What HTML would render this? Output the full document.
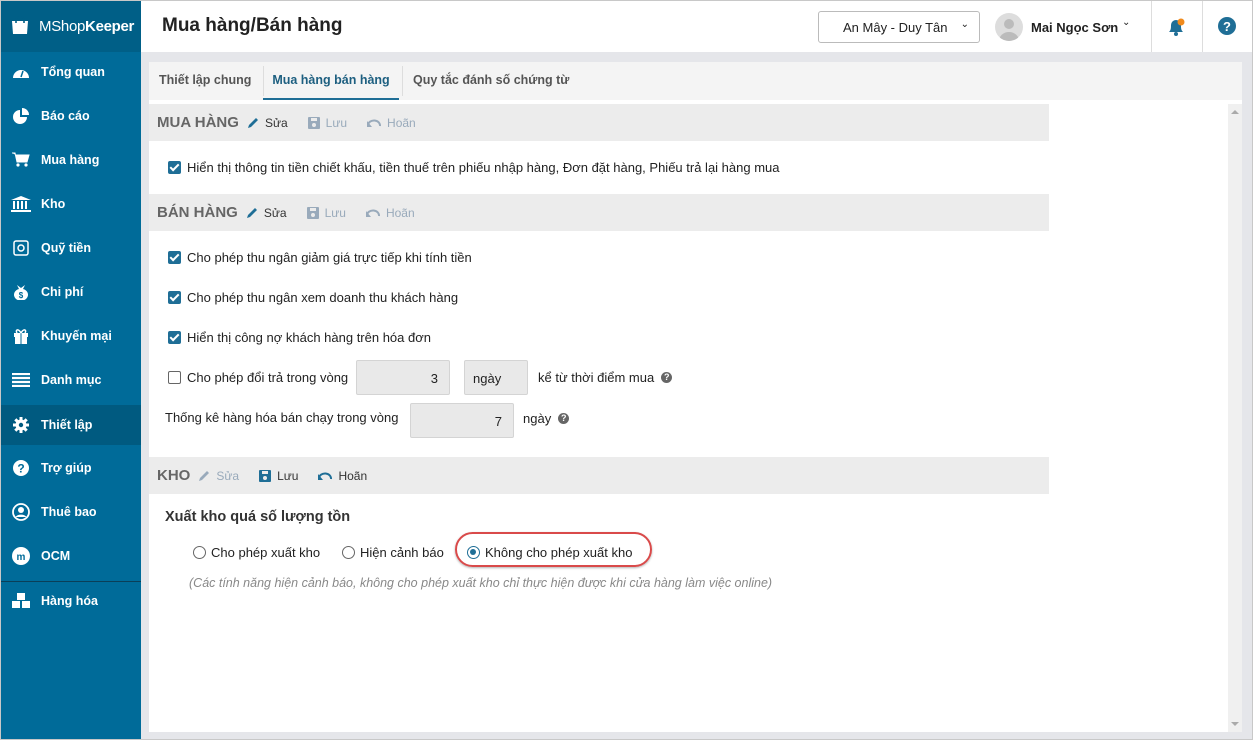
<!DOCTYPE html>
<html><head><meta charset="utf-8"><style>
*{box-sizing:border-box;margin:0;padding:0}
body{width:1253px;height:740px;overflow:hidden;font-family:"Liberation Sans",sans-serif;font-size:13px;color:#222;background:#e5e6ea;position:relative}
.frame{position:absolute;left:0;top:0;width:1253px;height:740px;border:1px solid #c8c8c8;pointer-events:none;z-index:9}
.side{position:absolute;left:0;top:0;width:141px;height:740px;background:#006b99;color:#fff}
.logo{height:52px;background:#005f87;display:flex;align-items:center;padding-left:10px;font-size:15px;letter-spacing:-0.3px}
.logo b{font-weight:bold}
.mi{position:absolute;left:0;width:141px;height:40px;display:flex;align-items:center;font-size:12.5px;font-weight:bold}
.mi .ic{width:20px;height:16px;margin:0 10px 0 11px;display:flex;align-items:center;justify-content:center}
.mi.act{background:#005a80}
.top{position:absolute;left:141px;top:0;right:0;height:52px;background:#fff}
.title{position:absolute;left:21px;top:15px;font-size:19px;font-weight:bold;color:#222}
.panel{position:absolute;left:149px;top:62px;width:1093px;height:670px;background:#fff}
.tabs{height:38px;background:#f4f4f4;position:relative;font-weight:bold;color:#555;font-size:12.5px}
.tab{position:absolute;top:0;height:38px;line-height:36px}
.sh{position:absolute;left:0;width:900px;height:37px;background:#ececec;display:flex;align-items:center;padding-left:8px;color:#666}
.sh .h{font-size:15px;font-weight:bold;color:#666;margin-right:8px}
.act2{color:#333;font-size:12px;margin-right:20px;display:flex;align-items:center;gap:6px}
.dis{color:#9ab}
.row{position:absolute;left:19px;display:flex;align-items:center;font-size:13px;color:#222}
.cb{width:13px;height:13px;border-radius:2px;background:#1f6e96;margin-right:6px;position:relative}
.cb:after{content:"";position:absolute;left:4px;top:1px;width:3px;height:7px;border:solid #fff;border-width:0 2px 2px 0;transform:rotate(45deg)}
.cbe{width:13px;height:13px;border:1.5px solid #666;border-radius:2px;margin-right:6px}
.inp{position:absolute;background:#e9e9e9;border:1px solid #d4d4d4;border-radius:2px;font-size:13px}
.q{display:inline-block;width:11px;height:11px;border-radius:50%;background:#666;color:#fff;font-size:9px;font-weight:bold;text-align:center;line-height:11px;margin-left:7px}
.rad{width:13px;height:13px;border:1.5px solid #666;border-radius:50%;margin-right:5px;position:relative}
.rad.on{border-color:#1f6e96}
.rad.on:after{content:"";position:absolute;left:2px;top:2px;width:6px;height:6px;border-radius:50%;background:#1f6e96}
</style></head><body>
<div class="frame"></div>
<div class="side">
<div class="logo"><svg width="20" height="20" viewBox="0 0 20 20"><path d="M2 5h16l-1 13H3z" fill="#fff"/><path d="M6 7V4a4 3 0 0 1 8 0v3" stroke="#005f87" stroke-width="1.6" fill="none"/></svg><span style="margin-left:9px">MShop<b>Keeper</b></span></div>
<div class="mi" style="top:52px"><span class="ic"><svg width="18" height="14" viewBox="0 0 18 14"><path d="M1 13a8 8 0 1 1 16 0z" fill="#fff"/><path d="M9 12l2-6" stroke="#006b99" stroke-width="1.5"/></svg></span>Tổng quan</div>
<div class="mi" style="top:96px"><span class="ic"><svg width="16" height="16"><path d="M7 2a7 7 0 1 0 7 7H7z" fill="#fff"/><path d="M9 0v7h7a7 7 0 0 0-7-7z" fill="#fff"/></svg></span>Báo cáo</div>
<div class="mi" style="top:140px"><span class="ic"><svg width="18" height="16"><path d="M0 1h3l2 9h10l2-7H4" fill="#fff" stroke="#fff"/><circle cx="6" cy="13" r="1.6" fill="#fff"/><circle cx="14" cy="13" r="1.6" fill="#fff"/></svg></span>Mua hàng</div>
<div class="mi" style="top:184px"><span class="ic"><svg width="20" height="16"><path d="M10 0l10 4H0z" fill="#fff"/><path d="M3 5v8M7 5v8M11 5v8M15 5v8" stroke="#fff" stroke-width="2"/><rect x="0" y="14" width="20" height="2" fill="#fff"/></svg></span>Kho</div>
<div class="mi" style="top:228px"><span class="ic"><svg width="16" height="16"><rect x="1" y="1" width="14" height="14" rx="2" fill="none" stroke="#fff" stroke-width="1.5"/><circle cx="8" cy="8" r="3" fill="none" stroke="#fff" stroke-width="1.5"/></svg></span>Quỹ tiền</div>
<div class="mi" style="top:272px"><span class="ic"><svg width="18" height="16"><path d="M5 1l4 3 4-3-2 4a7 6 0 1 1-4 0z" fill="#fff"/><text x="9" y="14" font-size="8" text-anchor="middle" fill="#006b99" font-weight="bold">$</text></svg></span>Chi phí</div>
<div class="mi" style="top:316px"><span class="ic"><svg width="16" height="16"><rect x="1" y="5" width="14" height="4" fill="#fff"/><rect x="2" y="9" width="12" height="7" fill="#fff"/><path d="M8 5v11" stroke="#006b99"/><path d="M8 5C5 0 2 2 4 5M8 5c3-5 6-3 4 0" stroke="#fff" fill="none" stroke-width="1.5"/></svg></span>Khuyến mại</div>
<div class="mi" style="top:360px"><span class="ic"><svg width="18" height="14"><path d="M0 1h18M0 5h18M0 9h18M0 13h18" stroke="#fff" stroke-width="2.2"/></svg></span>Danh mục</div>
<div class="mi act" style="top:405px"><span class="ic"><svg width="16" height="16" viewBox="0 0 16 16"><circle cx="8" cy="8" r="5.5" fill="#fff"/><path d="M8 0v16M0 8h16M2.3 2.3l11.4 11.4M13.7 2.3L2.3 13.7" stroke="#fff" stroke-width="3"/><circle cx="8" cy="8" r="2.2" fill="#005a80"/></svg></span>Thiết lập</div>
<div class="mi" style="top:448px"><span class="ic"><svg width="16" height="16"><circle cx="8" cy="8" r="8" fill="#fff"/><text x="8" y="12.5" font-size="12" font-weight="bold" text-anchor="middle" fill="#006b99">?</text></svg></span>Trợ giúp</div>
<div class="mi" style="top:492px"><span class="ic"><svg width="18" height="18"><circle cx="9" cy="9" r="8" fill="none" stroke="#fff" stroke-width="1.8"/><circle cx="9" cy="7" r="3" fill="#fff"/><path d="M3.5 14a6 4 0 0 1 11 0" fill="#fff"/></svg></span>Thuê bao</div>
<div class="mi" style="top:536px"><span class="ic"><svg width="18" height="18"><circle cx="9" cy="9" r="9" fill="#fff"/><text x="9" y="13" font-size="10" font-weight="bold" text-anchor="middle" fill="#006b99">m</text></svg></span>OCM</div>
<div style="position:absolute;top:581px;left:0;width:141px;height:1px;background:#0a3f58"></div>
<div class="mi" style="top:581px"><span class="ic"><svg width="22" height="18"><rect x="6" y="1" width="8" height="7" fill="#fff"/><rect x="1" y="9" width="8" height="7" fill="#fff"/><rect x="11" y="9" width="8" height="7" fill="#fff"/></svg></span>Hàng hóa</div>
</div>
<div class="top">
<div class="title">Mua hàng/Bán hàng</div>
<div style="position:absolute;left:677px;top:11px;width:162px;height:32px;border:1px solid #bbb;border-radius:3px;font-size:13px;padding:8px 0 0 24px;color:#222">An Mây - Duy Tân<span style="position:absolute;right:10px;top:7px;font-size:10px">&#8964;</span></div>
<div style="position:absolute;left:854px;top:13px;width:28px;height:28px;border-radius:50%;background:#ddd;overflow:hidden"><svg width="28" height="28"><circle cx="14" cy="11" r="5" fill="#bbb"/><path d="M4 28a10 9 0 0 1 20 0z" fill="#bbb"/></svg></div>
<div style="position:absolute;left:890px;top:20px;font-size:13px;font-weight:bold">Mai Ngọc Sơn</div>
<div style="position:absolute;left:981px;top:17px;font-size:10px">&#8964;</div>
<div style="position:absolute;left:1010px;top:0;width:1px;height:52px;background:#ddd"></div>
<div style="position:absolute;left:1061px;top:0;width:1px;height:52px;background:#ddd"></div>
<svg style="position:absolute;left:1026px;top:17px" width="20" height="20"><path d="M2 15c2-2 2-4 2-7a5 5 0 0 1 10 0c0 3 0 5 2 7z" fill="#1f6e96"/><circle cx="9" cy="17" r="2" fill="#1f6e96"/><circle cx="14" cy="5" r="3.5" fill="#f08a1c"/></svg>
<svg style="position:absolute;left:1076px;top:16px" width="20" height="20"><circle cx="10" cy="10" r="9" fill="#1f6e96"/><text x="10" y="15" font-size="13" font-weight="bold" text-anchor="middle" fill="#fff">?</text></svg>
</div>
<div class="panel">
<div class="tabs">
<div class="tab" style="left:10px">Thiết lập chung</div>
<div style="position:absolute;left:114px;top:4px;width:1px;height:30px;background:#ddd"></div>
<div class="tab" style="left:114px;width:136px;text-align:center;color:#1d5f80;border-bottom:2px solid #1f6e96">Mua hàng bán hàng</div>
<div style="position:absolute;left:253px;top:4px;width:1px;height:30px;background:#ddd"></div>
<div class="tab" style="left:264px">Quy tắc đánh số chứng từ</div>
</div>
<div class="sh" style="top:42px"><span class="h">MUA HÀNG</span><span class="act2"><svg width="12" height="12"><path d="M1 11l1-3 7-7 2 2-7 7z" fill="#1f6e96"/></svg>Sửa</span><span class="act2 dis"><svg width="12" height="12"><rect x="0" y="0" width="12" height="12" rx="1" fill="#9ab"/><rect x="3" y="1" width="6" height="3" fill="#ececec"/><circle cx="6" cy="8" r="2" fill="#ececec"/></svg>Lưu</span><span class="act2 dis"><svg width="14" height="10"><path d="M1 7a6 5 0 0 1 12 1" stroke="#9ab" stroke-width="2" fill="none"/><path d="M0 3v6h5z" fill="#9ab"/></svg>Hoãn</span></div>
<div class="row" style="top:98px"><span class="cb"></span>Hiển thị thông tin tiền chiết khấu, tiền thuế trên phiếu nhập hàng, Đơn đặt hàng, Phiếu trả lại hàng mua</div>
<div class="sh" style="top:132px"><span class="h">BÁN HÀNG</span><span class="act2"><svg width="12" height="12"><path d="M1 11l1-3 7-7 2 2-7 7z" fill="#1f6e96"/></svg>Sửa</span><span class="act2 dis"><svg width="12" height="12"><rect x="0" y="0" width="12" height="12" rx="1" fill="#9ab"/><rect x="3" y="1" width="6" height="3" fill="#ececec"/><circle cx="6" cy="8" r="2" fill="#ececec"/></svg>Lưu</span><span class="act2 dis"><svg width="14" height="10"><path d="M1 7a6 5 0 0 1 12 1" stroke="#9ab" stroke-width="2" fill="none"/><path d="M0 3v6h5z" fill="#9ab"/></svg>Hoãn</span></div>
<div class="row" style="top:188px"><span class="cb"></span>Cho phép thu ngân giảm giá trực tiếp khi tính tiền</div>
<div class="row" style="top:228px"><span class="cb"></span>Cho phép thu ngân xem doanh thu khách hàng</div>
<div class="row" style="top:268px"><span class="cb"></span>Hiển thị công nợ khách hàng trên hóa đơn</div>
<div class="row" style="top:308px"><span class="cbe"></span>Cho phép đổi trả trong vòng</div>
<div class="inp" style="left:207px;top:298px;width:94px;height:35px;text-align:right;padding:10px 11px 0 0">3</div>
<div class="inp" style="left:315px;top:298px;width:64px;height:35px;padding:10px 0 0 8px">ngày</div>
<div class="row" style="left:389px;top:308px">kể từ thời điểm mua<span class="q">?</span></div>
<div class="row" style="left:16px;top:348px">Thống kê hàng hóa bán chạy trong vòng</div>
<div class="inp" style="left:261px;top:341px;width:104px;height:35px;text-align:right;padding:10px 11px 0 0">7</div>
<div class="row" style="left:374px;top:349px">ngày<span class="q">?</span></div>
<div class="sh" style="top:395px"><span class="h">KHO</span><span class="act2 dis"><svg width="12" height="12"><path d="M1 11l1-3 7-7 2 2-7 7z" fill="#9ab"/></svg>Sửa</span><span class="act2"><svg width="12" height="12"><rect x="0" y="0" width="12" height="12" rx="1" fill="#1f6e96"/><rect x="3" y="1" width="6" height="3" fill="#ececec"/><circle cx="6" cy="8" r="2" fill="#ececec"/></svg>Lưu</span><span class="act2"><svg width="14" height="10"><path d="M1 7a6 5 0 0 1 12 1" stroke="#1f6e96" stroke-width="2" fill="none"/><path d="M0 3v6h5z" fill="#1f6e96"/></svg>Hoãn</span></div>
<div class="row" style="left:16px;top:447px;font-size:14.5px;font-weight:bold;color:#333">Xuất kho quá số lượng tồn</div>
<div class="row" style="left:44px;top:483px"><span class="rad"></span>Cho phép xuất kho</div>
<div class="row" style="left:193px;top:483px"><span class="rad"></span>Hiện cảnh báo</div>
<div class="row" style="left:318px;top:483px"><span class="rad on"></span>Không cho phép xuất kho</div>
<div style="position:absolute;left:306px;top:470px;width:197px;height:35px;border:2px solid #d94a4a;border-radius:18px;box-shadow:0 1px 2px rgba(0,0,0,.3)"></div>
<div class="row" style="left:40px;top:514px;font-style:italic;color:#888;font-size:12.5px">(Các tính năng hiện cảnh báo, không cho phép xuất kho chỉ thực hiện được khi cửa hàng làm việc online)</div>
<div style="position:absolute;left:1079px;top:42px;width:14px;height:628px;background:#f0f0f0"><div style="margin:6px auto 0;width:0;height:0;border:4px solid transparent;border-bottom-color:#aaa;border-top:0"></div><div style="position:absolute;bottom:6px;left:3px;width:0;height:0;border:4px solid transparent;border-top-color:#aaa;border-bottom:0"></div></div>
</div>
</body></html>
